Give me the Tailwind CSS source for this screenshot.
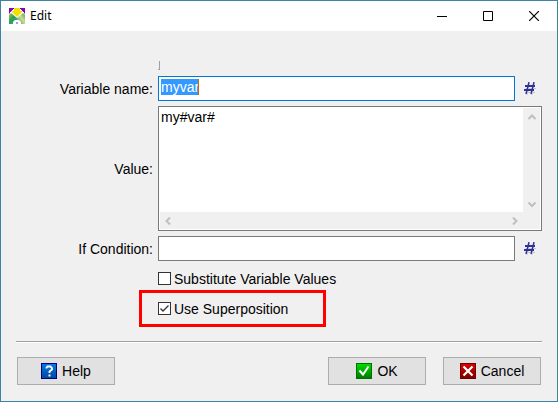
<!DOCTYPE html>
<html lang="en">
<head>
    <meta charset="UTF-8">
    <meta name="viewport" content="width=device-width, initial-scale=1.0">
    <title>Edit</title>
    <script src="https://cdn.jsdelivr.net/npm/@tailwindcss/browser@4"></script>
</head>
<body class="bg-[#f0f0f0] text-black text-sm font-['Liberation_Sans',Arial,sans-serif]">
    <div class="min-h-screen flex flex-col border border-[#3d84a2]">
        <header class="h-[30px] flex items-center bg-white pl-2">
            <svg class="size-4" viewBox="0 0 16 16">
                <defs>
                    <linearGradient id="leftFill" x1="0" y1="0" x2="1" y2="1"><stop offset="0" stop-color="#b4cc3c" /><stop offset=".45" stop-color="#2f9e4a" /><stop offset="1" stop-color="#22b4c0" /></linearGradient>
                    <linearGradient id="rightFill" x1="0" y1="1" x2="1" y2="0"><stop offset="0" stop-color="#1c9c9c" /><stop offset=".55" stop-color="#d3dc8a" /><stop offset="1" stop-color="#48a83c" /></linearGradient>
                </defs>
                <path fill="#fff" d="M0 0h16v16H0z" />
                <path fill="#8a00b8" d="M0 0h5v1H4v1H3v1H2v1H1v1H0zM11 0h5v5h-1V4h-1V3h-1V2h-1V1h-1z" />
                <path fill="#c77be0" d="M0 5h1v1H0zM15 5h1v1h-1z" />
                <path fill="url(#leftFill)" d="M0 7l2-2 6 5v6H0z" />
                <path fill="url(#rightFill)" d="M16 7l-2-2-6 5v6h8z" />
                <path fill="#f2e000" d="M5 0h6v3h3L8 9 2 3h3z" />
                <path fill="#fff" d="M4 16v-2l1-1 1-1h4l1 1 1 1v2z" />
                <path fill="#c890e0" d="M7 14h2v2H7z" />
            </svg>
            <h1 class="ml-[5px] flex-1 text-xs font-['Noto_Sans','Open_Sans',sans-serif]">Edit</h1>
            <button type="button" aria-label="Minimize" class="w-[46px] h-full grid place-items-center">
                <svg class="size-[11px]" viewBox="0 0 11 11" shape-rendering="crispEdges"><path d="M0 5h10v1H0z" /></svg>
            </button>
            <button type="button" aria-label="Maximize" class="w-[46px] h-full grid place-items-center">
                <svg class="size-[10px]" viewBox="0 0 10 10" fill="none" stroke="#000"><path d="M.5.5h9v9h-9z" /></svg>
            </button>
            <button type="button" aria-label="Close" class="w-[46px] h-full grid place-items-center">
                <svg class="size-[10px]" viewBox="0 0 10 10" fill="none" stroke="#000" stroke-width="1.2"><path d="M0 0l10 10M10 0L0 10" /></svg>
            </button>
        </header>

        <form class="flex-1 flex flex-col px-[15px] pt-[30px] pb-4">
            <div class="flex-1 grid grid-cols-[137px_1fr_22px] grid-rows-[10px_25px_1fr_25px_25px_25px] gap-[5px] items-center">
                <div class="col-start-2 self-start w-[2px] h-[9px] border-r border-b border-[#a0a0a0]"></div>

                <label for="varName" class="col-start-1 text-right">Variable name:</label>
                <div class="relative">
                    <input type="text" id="varName" value="myvar" class="block w-full h-[25px] bg-white border border-[#0078d7] px-[2px] pb-[3px] outline-none selection:bg-[#3399fffe] selection:text-white">
                    <span class="absolute left-10 top-[3px] w-px h-4 bg-[#cc6600] pointer-events-none"></span>
                </div>
                <button type="button" aria-label="Insert variable name" class="ml-1">
                    <svg class="w-3 h-[13px]" viewBox="0 0 12 13" fill="none"><path stroke="#c8c8c8" d="M5.5 1L3 13M10.500 1L8 13M2 6.500h10M1 10.500h10" /><path stroke="#31319c" stroke-width="1.4" d="M5 0L2 12M10 0L7 12" /><path stroke="#31319c" stroke-width="2" d="M1 4h10M0 8h10" /></svg>
                </button>

                <label for="varValue" class="text-right">Value:</label>
                <div class="col-span-2 self-stretch min-h-[125px] grid grid-cols-[1fr_17px] grid-rows-[1fr_17px] bg-white border border-[#7a7a7a] p-px">
                    <textarea id="varValue" class="resize-none outline-none overflow-hidden px-px leading-[18px]">my#var#</textarea>
                    <div class="flex flex-col items-center justify-between bg-[#f0f0f0] pt-[6px] pb-1">
                        <svg class="w-2 h-[6px]" viewBox="0 0 8 6" fill="none" stroke="#bfbfbf" stroke-width="2"><path d="M.5 5L4 1.500 7.500 5" /></svg>
                        <svg class="w-2 h-[6px]" viewBox="0 0 8 6" fill="none" stroke="#bfbfbf" stroke-width="2"><path d="M.5.5L4 4 7.500.5" /></svg>
                    </div>
                    <div class="flex items-center justify-between bg-[#f0f0f0] px-[5px]">
                        <svg class="w-[6px] h-2" viewBox="0 0 6 8" fill="none" stroke="#bfbfbf" stroke-width="2"><path d="M5 .5L1.500 4 5 7.500" /></svg>
                        <svg class="w-[6px] h-2" viewBox="0 0 6 8" fill="none" stroke="#bfbfbf" stroke-width="2"><path d="M1 .5L4.500 4 1 7.500" /></svg>
                    </div>
                    <div class="bg-[#f0f0f0]"></div>
                </div>

                <label for="ifCondition" class="text-right">If Condition:</label>
                <input type="text" id="ifCondition" class="w-full min-w-0 h-[25px] bg-white border border-[#7a7a7a] px-[2px] outline-none">
                <button type="button" aria-label="Insert condition variable" class="ml-1">
                    <svg class="w-3 h-[13px]" viewBox="0 0 12 13" fill="none"><path stroke="#c8c8c8" d="M5.500 1L3 13M10.500 1L8 13M2 6.500h10M1 10.500h10" /><path stroke="#31319c" stroke-width="1.4" d="M5 0L2 12M10 0L7 12" /><path stroke="#31319c" stroke-width="2" d="M1 4h10M0 8h10" /></svg>
                </button>

                <label class="col-start-2 justify-self-start flex items-center gap-[3px]">
                    <input type="checkbox" class="appearance-none size-[13px] bg-white border border-[#333]">
                    Substitute Variable Values
                </label>

                <label class="relative col-start-2 justify-self-start self-stretch flex items-center gap-[3px]">
                    <span class="grid">
                        <input type="checkbox" checked class="col-start-1 row-start-1 appearance-none size-[13px] bg-white border border-[#333]">
                        <svg class="col-start-1 row-start-1 size-[13px] pointer-events-none" viewBox="0 0 13 13" fill="none" stroke="#333" stroke-width="1.3"><path d="M2.500 6.500L5 9l5.500-5.500" /></svg>
                    </span>
                    Use Superposition
                    <span class="absolute -inset-y-[6px] -left-[19px] -right-[38px] border-3 border-[#ff0000] pointer-events-none"></span>
                </label>
            </div>

            <hr class="mt-5 h-[2px] border-t border-b border-t-[#a0a0a0] border-b-white">

            <div class="mt-[14px] flex px-px gap-[17px]">
                <button type="button" class="w-[98px] h-7 mr-auto flex items-center justify-center gap-[5px] bg-[#e1e1e1] border border-[#adadad]">
                    <svg class="size-4" viewBox="0 0 16 16">
                        <linearGradient id="helpFill" x2="0" y2="1"><stop stop-color="#0878e8" /><stop offset="1" stop-color="#004a98" /></linearGradient>
                        <rect x=".5" y=".5" width="15" height="15" fill="url(#helpFill)" stroke="#000080" />
                        <path fill="none" stroke="#fff" stroke-width="1.8" d="M5.500 5.500V4.500L6.500 3.500h3l1.500 1.500v1.500L8.500 8.500V10" /><path fill="#fff" d="M7.500 11.500h2v2h-2z" />
                    </svg>
                    Help
                </button>
                <button type="submit" class="w-[98px] h-7 flex items-center justify-center gap-[5px] bg-[#e1e1e1] border border-[#adadad]">
                    <svg class="size-4" viewBox="0 0 16 16">
                        <linearGradient id="okFill" x2="0" y2="1"><stop stop-color="#00e000" /><stop offset="1" stop-color="#007800" /></linearGradient>
                        <rect x=".5" y=".5" width="15" height="15" fill="url(#okFill)" stroke="#007000" />
                        <path fill="none" stroke="#fff" stroke-width="2" d="M3.500 7.500L7 11.500l5.500-8" />
                    </svg>
                    OK
                </button>
                <button type="button" class="w-[98px] h-7 flex items-center justify-center gap-[5px] bg-[#e1e1e1] border border-[#adadad]">
                    <svg class="size-4" viewBox="0 0 16 16">
                        <linearGradient id="cancelFill" x2="0" y2="1"><stop stop-color="#e00000" /><stop offset="1" stop-color="#780000" /></linearGradient>
                        <rect x=".5" y=".5" width="15" height="15" fill="url(#cancelFill)" stroke="#700000" />
                        <path fill="none" stroke="#fff" stroke-width="2.200" d="M3.500 3.500l9 9M12.500 3.500l-9 9" />
                    </svg>
                    Cancel
                </button>
            </div>
        </form>
    </div>

    <script>
        // open with the name ready to be replaced
        const varName = document.getElementById('varName');
        varName.focus();
        varName.select();
    </script>
</body>
</html>
